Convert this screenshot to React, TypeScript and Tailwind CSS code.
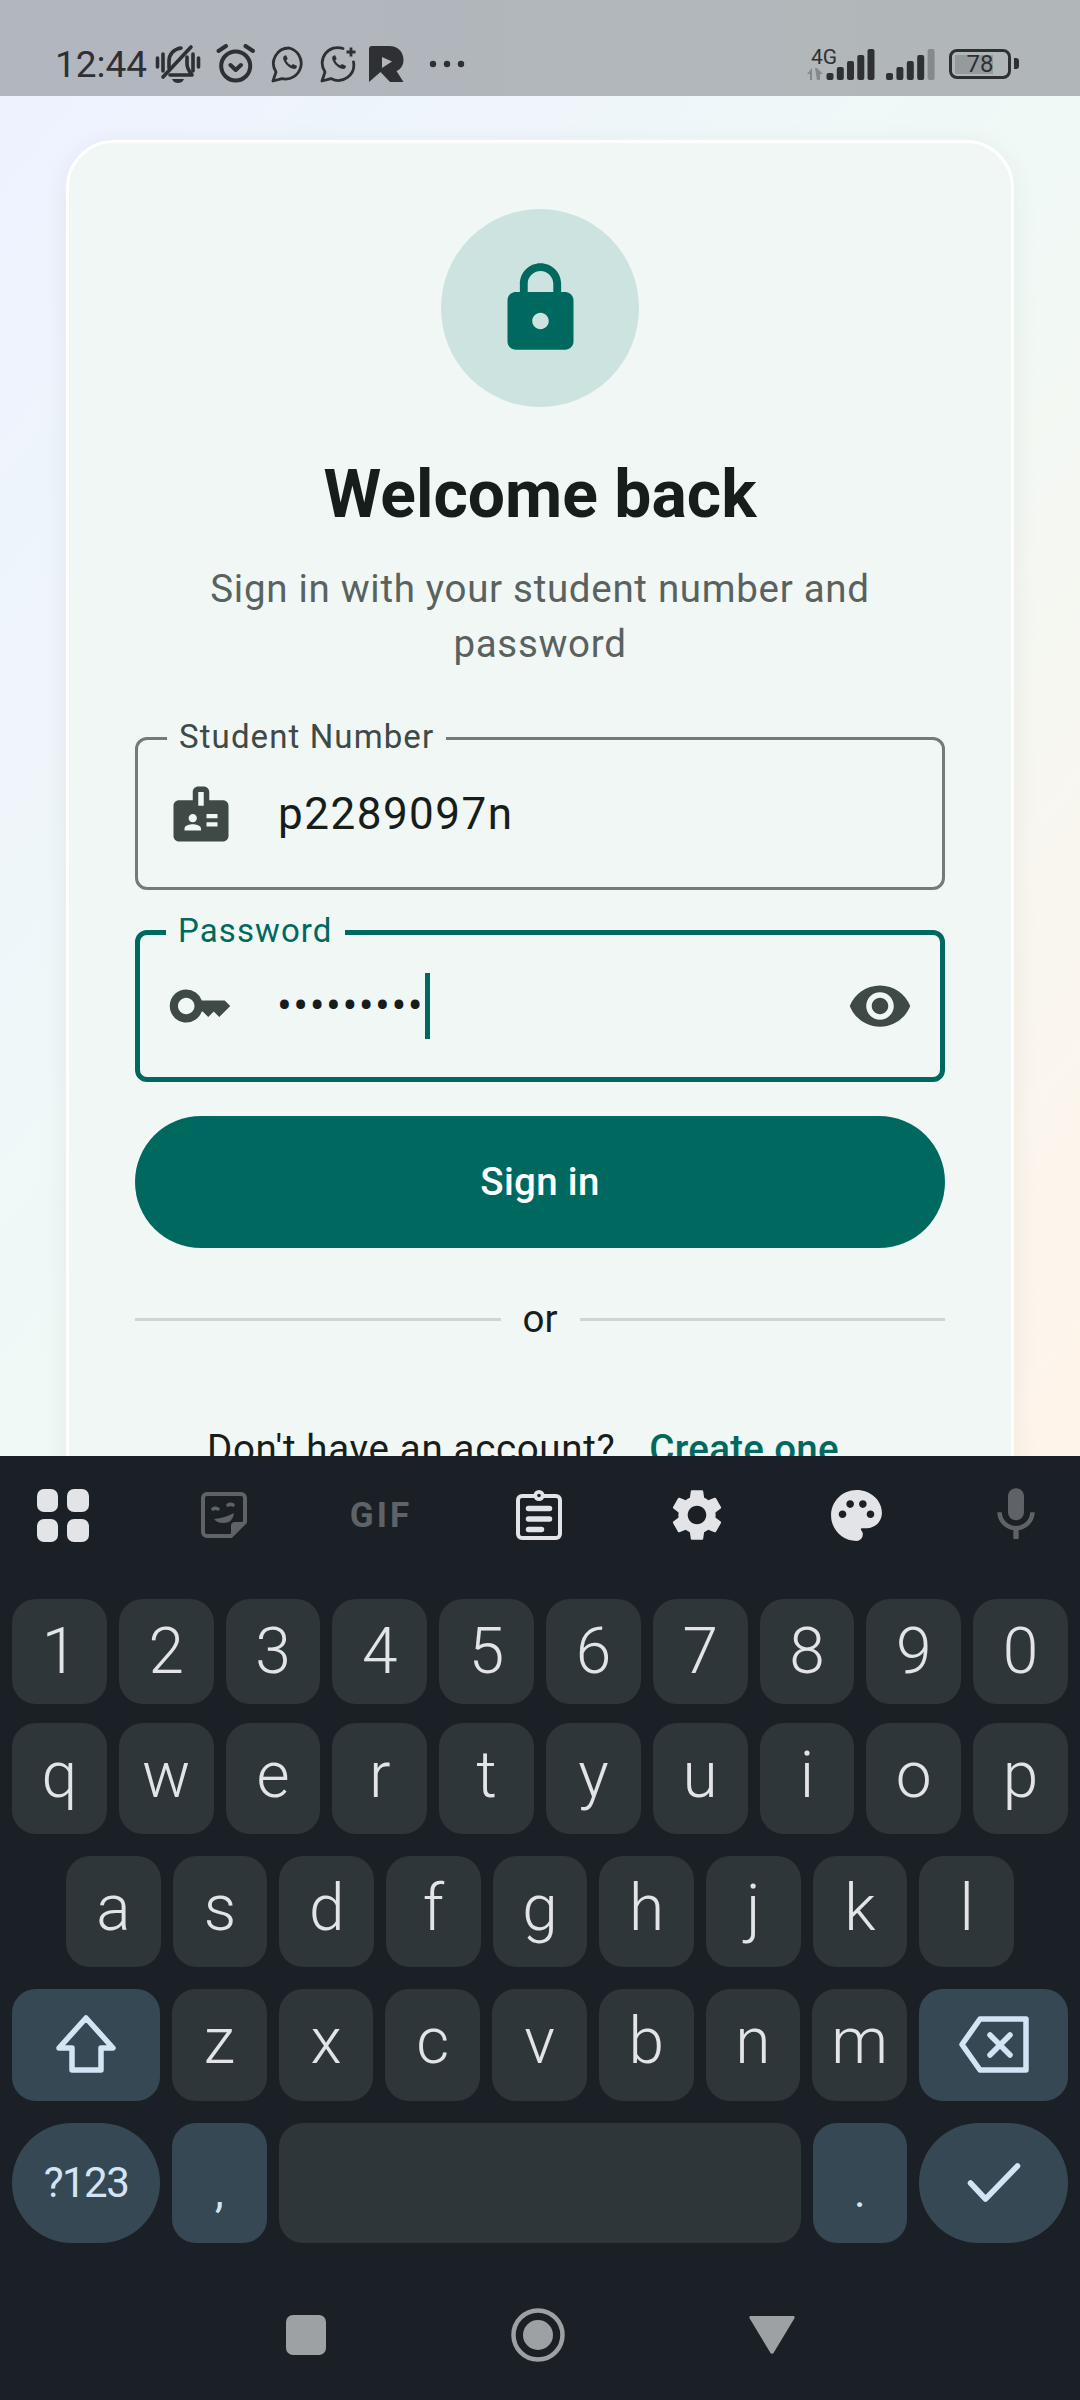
import React from 'react';
import { MdBadge, MdKey, MdLock, MdMic, MdPalette, MdSettings, MdVisibility } from 'react-icons/md';

const RowKeys = ({ keys }: { keys: string[] }) => (
  <>
    {keys.map(k => (
      <div key={k} className="flex-1 rounded-[24px] bg-[#2f3639] flex items-center justify-center pb-[6px] text-[64px] leading-none font-[350] text-[#e2e4e7]">
        {k}
      </div>
    ))}
  </>
);

const WaIcon = ({ plus }: { plus?: boolean }) => (
  <svg width="38" height="38" viewBox="0 0 38 38" fill="none" stroke="#2e3033" strokeWidth="2.8" strokeLinecap="round" strokeLinejoin="round">
    {plus ? (
      <path d="M23 3.5A15.5 15.5 0 0 0 5 27L2 36l9-2.4A15.5 15.5 0 0 0 33.5 17" />
    ) : (
      <path d="M18 3a15.5 15.5 0 0 0-13 24L2 36l9-2.4A15.5 15.5 0 1 0 18 3z" />
    )}
    <path d="M12.5 11.5c-2 3 4.5 12.5 11 12.5 1.500 0 2.500-1.500 2.500-3l-4-2-1.800 1.500c-2-1-4-3-5-5l1.500-1.800-1.700-3.700z" fill="#2e3033" stroke="none" />
    {plus && <path d="M31 2.500v9M26.500 7h9" strokeLinecap="butt" />}
  </svg>
);

const SignalBars = ({ xs, lastDim }: { xs: number[]; lastDim?: boolean }) => (
  <>
    {xs.map((x, i) => {
      const h = 7 + i * 6;
      return <rect key={x} x={x} y={33 - h} width="7" height={h} rx="2" fill={lastDim && i === 4 ? '#85898b' : '#2e3033'} />;
    })}
  </>
);

const StatusBar = () => (
  <div className="h-[96px] shrink-0 pt-[32px] pl-[55px] pr-[69px] flex items-center bg-linear-to-r from-[#b2b6bf] to-[#b1b7b8] text-[#2e3033]">
    <span className="text-[37px] leading-none font-[450]">12:44</span>
    {/* bell, muted */}
    <svg className="ml-[7px]" width="48" height="40" viewBox="0 0 48 40" fill="none" stroke="#2e3033" strokeWidth="3.6" strokeLinecap="round">
      <path d="M3.500 14v9M9 10v17M44.500 14v9M39 10v17M9 33L37 3" />
      <path d="M15 24v-7c0-7 5-12 12-13M33 13v7c0 5 3 8 5 11H16" strokeLinejoin="round" />
      <path d="M18 35h12c-1 3-4 4-6 4s-5-1-6-4z" fill="#2e3033" stroke="none" />
    </svg>
    {/* alarm */}
    <svg className="ml-[13px]" width="42" height="40" viewBox="0 0 42 40" fill="none" stroke="#2e3033" strokeWidth="4" strokeLinecap="round" strokeLinejoin="round">
      <circle cx="20.700" cy="22" r="14.500" />
      <path d="M15.500 21l5.200 5 5.200-5M3.500 7L11 2M38 7l-7.500-5" />
    </svg>
    <div className="ml-[14px]"><WaIcon /></div>
    <div className="ml-[11px]"><WaIcon plus /></div>
    {/* R app logo */}
    <svg className="ml-[11px]" width="35" height="36" viewBox="0 0 35 36" fill="#2e3033" fillRule="evenodd">
      <path d="M0 3Q0 0 3 0H20C29 0 34.500 6 34.500 14 34.500 19 32 23 27.500 25L34.500 36H21L11.500 26 0 36ZM13 11V22L23 15.500Z" />
    </svg>
    <svg className="ml-[25px]" width="36" height="8" viewBox="0 0 36 8" fill="#2e3033">
      <circle cx="4" cy="4" r="3.200" />
      <circle cx="18" cy="4" r="3.200" />
      <circle cx="32" cy="4" r="3.200" />
    </svg>

    <div className="ml-auto relative w-[68px] h-[34px]">
      <svg width="68" height="34" viewBox="0 0 68 34">
        <path d="M0 27l5-6v12h-2v-6zM8 21h2l6 6h-3v6h-3z" fill="#85898b" />
        <SignalBars xs={[19.500, 29.800, 40, 50.300, 60.500]} />
      </svg>
      <span className="absolute left-[4px] top-[-1px] text-[21px] leading-[22px]">4G</span>
    </div>
    <svg className="ml-[11px]" width="49" height="34" viewBox="0 0 49 34">
      <SignalBars xs={[0, 10.400, 20.800, 31.200, 41.600]} lastDim />
    </svg>
    <div className="ml-[14px] relative w-[62px] h-[30px] rounded-[8px] border-[3.5px] border-[#2e3033] flex items-center justify-center">
      <div className="absolute left-[3px] top-[2.500px] bottom-[2.500px] w-[38px] bg-[#959a9d]" />
      <span className="relative text-[24px] leading-none">78</span>
      <div className="absolute right-[-10.500px] top-[6px] w-[5px] h-[11px] rounded-r-[3px] bg-[#2e3033]" />
    </div>
  </div>
);

const LoginCard = () => (
  <div className="rounded-[48px] border-[3px] border-white bg-[#f1f7f5] shadow-[0_6px_26px_rgba(40,60,50,0.07)] p-[66px] flex flex-col items-center">
    <div className="w-[198px] h-[198px] rounded-full bg-[#cce3df] flex items-center justify-center">
      <MdLock size={99} color="#00695f" />
    </div>
    <h1 className="mt-[44px] text-[66px] leading-[88px] font-bold text-[#171d1b]">Welcome back</h1>
    <p className="mt-[22px] text-[38.500px] leading-[55px] tracking-[0.7px] text-center text-[#5a625f] w-[700px]">
      Sign in with your student number and password
    </p>

    <div className="mt-[66px] w-full relative h-[153px] rounded-[12px] border-[3px] border-[#747a77] pl-[30px] flex items-center">
      <span className="absolute left-[29px] top-[-3px] -translate-y-1/2 bg-[#f1f7f5] px-[12px] text-[33px] leading-[44px] tracking-[1.1px] text-[#3f4946]">Student Number</span>
      <MdBadge size={66} color="#3f4946" />
      <span className="ml-[44px] text-[44px] leading-none tracking-[1.500px] text-[#171d1b]">p2289097n</span>
    </div>

    <div className="mt-[40px] w-full relative h-[152px] rounded-[12px] border-[5.500px] border-[#00695f] pl-[27px] pr-[27px] flex items-center">
      <span className="absolute left-[26px] top-[-4px] -translate-y-1/2 bg-[#f1f7f5] px-[12px] text-[33px] leading-[44px] tracking-[1.1px] text-[#00695f]">Password</span>
      <MdKey size={66} color="#3f4946" />
      <span className="ml-[44px] text-[44px] leading-none tracking-[1.500px] text-[#171d1b]">•••••••••</span>
      <div className="ml-[1px] w-[5px] h-[66px] bg-[#00695f]" />
      <MdVisibility size={66} color="#3f4946" className="ml-auto" />
    </div>

    <div className="mt-[34px] w-full h-[132px] rounded-full bg-[#00695f] flex items-center justify-center text-[38.500px] leading-none font-medium tracking-[0.3px] text-white">
      Sign in
    </div>

    <div className="mt-[56px] w-full flex items-center text-[38.500px] leading-[30px] text-[#171d1b]">
      <div className="flex-1 h-[3px] bg-[#ced5d2]" />
      <span className="px-[22px]">or</span>
      <div className="flex-1 h-[3px] bg-[#ced5d2]" />
    </div>

    <p className="mt-[87px] text-[38.500px] leading-[55px] tracking-[0.65px] text-[#171d1b] whitespace-nowrap">
      Don't have an account?
      <span className="ml-[34px] pr-[34px] font-medium tracking-[0.3px] text-[#00695f]">Create one</span>
    </p>
  </div>
);

const Keyboard = () => (
  <div className="h-[944px] shrink-0 bg-[#1b2027] flex flex-col">
    <div className="h-[118px] pl-[30px] flex items-center">
      <div className="w-[66px] flex justify-center">
        <svg width="52" height="53" viewBox="0 0 52 53" fill="#e2e4e7">
          <rect x="0" y="0" width="21" height="23" rx="7" />
          <rect x="30" y="0" width="22" height="23" rx="7" />
          <rect x="0" y="30" width="21" height="23" rx="7" />
          <rect x="30" y="30" width="22" height="23" rx="7" />
        </svg>
      </div>
      <div className="ml-[95px] w-[66px] flex justify-center">
        <svg width="46" height="46" viewBox="0 0 46 46" fill="none" stroke="#5f6367" strokeWidth="4">
          <path d="M6 2H40A4 4 0 0 1 44 6V30L30 44H6A4 4 0 0 1 2 40V6A4 4 0 0 1 6 2Z" strokeLinejoin="round" />
          <path d="M44 30H34A4 4 0 0 0 30 34V44Z" fill="#5f6367" stroke="none" />
          <path d="M12 17c1.500-1 3-1 5 0M27 13c1.500-1 3.500-1 5 0" strokeWidth="3.500" strokeLinecap="round" />
          <path d="M13 27Q24 26 33 21 32 31 22 31 16 31 13 27Z" fill="#5f6367" stroke="none" />
        </svg>
      </div>
      <div className="ml-[91px] w-[66px] flex justify-center text-[35px] leading-none font-bold tracking-[3px] text-[#5f6367]">GIF</div>
      <div className="ml-[92px] w-[66px] flex justify-center">
        <svg width="46" height="50" viewBox="0 0 46 50" fill="none">
          <rect x="2" y="6" width="42" height="42" rx="4" stroke="#e2e4e7" strokeWidth="4" />
          <circle cx="23" cy="5.500" r="5.500" fill="#e2e4e7" />
          <circle cx="23" cy="5.500" r="1.800" fill="#1b2027" />
          <path d="M12.500 18.500h21M12.500 29h21M12.500 39.500h13" stroke="#e2e4e7" strokeWidth="5.500" strokeLinecap="round" />
        </svg>
      </div>
      <div className="ml-[92px] w-[66px] flex justify-center"><MdSettings size={62} color="#e2e4e7" /></div>
      <div className="ml-[93px] w-[66px] flex justify-center"><MdPalette size={61} color="#e2e4e7" /></div>
      <div className="ml-[94px] w-[66px] flex justify-center"><MdMic size={64} color="#5f6367" /></div>
    </div>

    <div className="mt-[25px] h-[105px] px-[12px] flex gap-[12px]">
      {['1', '2', '3', '4', '5', '6', '7', '8', '9', '0'].map(k => (
        <div key={k} className="flex-1 rounded-[24px] bg-[#2f3639] flex items-center justify-center text-[64px] leading-none font-[350] text-[#e2e4e7]">{k}</div>
      ))}
    </div>
    <div className="mt-[19px] h-[111px] px-[12px] flex gap-[12px]">
      <RowKeys keys={['q', 'w', 'e', 'r', 't', 'y', 'u', 'i', 'o', 'p']} />
    </div>
    <div className="mt-[22px] h-[111px] px-[66px] flex gap-[12px]">
      <RowKeys keys={['a', 's', 'd', 'f', 'g', 'h', 'j', 'k', 'l']} />
    </div>
    <div className="mt-[22px] h-[112px] px-[12px] flex gap-[12px]">
      <div className="w-[148px] rounded-[24px] bg-[#374855] flex items-center justify-center">
        <svg width="70" height="70" viewBox="0 0 70 70" fill="none" stroke="#d3e5f5" strokeWidth="5.500" strokeLinejoin="round">
          <path d="M35 8L62 38H50V60H21V38H8Z" />
        </svg>
      </div>
      <RowKeys keys={['z', 'x', 'c', 'v', 'b', 'n', 'm']} />
      <div className="w-[149px] rounded-[24px] bg-[#374855] flex items-center justify-center">
        <svg width="84" height="70" viewBox="0 0 84 70" fill="none" stroke="#d3e5f5" strokeWidth="5.500" strokeLinejoin="round" strokeLinecap="round">
          <path d="M10 34.500L28 9H74V60H28Z" />
          <path d="M38 25L58 45M58 25L38 45" />
        </svg>
      </div>
    </div>
    <div className="mt-[22px] h-[120px] px-[12px] flex gap-[12px] text-[#d3e5f5]">
      <div className="w-[148px] rounded-[60px] bg-[#374855] flex items-center justify-center text-[42px] leading-none tracking-[-1.500px]">?123</div>
      <div className="flex-1 rounded-[24px] bg-[#374855] flex items-center justify-center pt-[18px] text-[44px] leading-none">,</div>
      <div className="w-[522px] rounded-[24px] bg-[#2f3639]" />
      <div className="flex-1 rounded-[24px] bg-[#374855] flex items-center justify-center pt-[18px] text-[44px] leading-none">.</div>
      <div className="w-[149px] rounded-[60px] bg-[#374855] flex items-center justify-center">
        <svg width="66" height="66" viewBox="0 0 66 66" fill="none" stroke="#d3e5f5" strokeWidth="5.500" strokeLinejoin="round" strokeLinecap="round">
          <path d="M9.500 33L24.500 49L56.500 16" />
        </svg>
      </div>
    </div>

    <div className="flex-1 flex items-center justify-center pt-[26px]">
      <div className="w-[40px] h-[40px] rounded-[7px] bg-[#9ea1a3]" />
      <svg className="ml-[185px]" width="54" height="54" viewBox="0 0 54 54" fill="none">
        <circle cx="27" cy="27" r="24.500" stroke="#9ea1a3" strokeWidth="4.500" />
        <circle cx="27" cy="27" r="15" fill="#9ea1a3" />
      </svg>
      <svg className="ml-[184px]" width="46" height="38" viewBox="0 0 46 38" fill="#9ea1a3">
        <path d="M2 0H44C46 0 46 2 45 3L24.500 37C23.800 38 22.200 38 21.500 37L1 3C0 2 0 0 2 0Z" />
      </svg>
    </div>
  </div>
);

const App: React.FC = () => {
  return (
    <div className="w-[1080px] h-[2400px] overflow-hidden flex flex-col [font-family:Roboto,sans-serif]">
      <StatusBar />
      <div className="flex-1 min-h-0 overflow-hidden px-[66px] pt-[44px] bg-linear-to-br from-[#eef2ff] via-[#f0f9f6] to-[#fff4ea]">
        <LoginCard />
      </div>
      <Keyboard />
    </div>
  );
};

export default App;
